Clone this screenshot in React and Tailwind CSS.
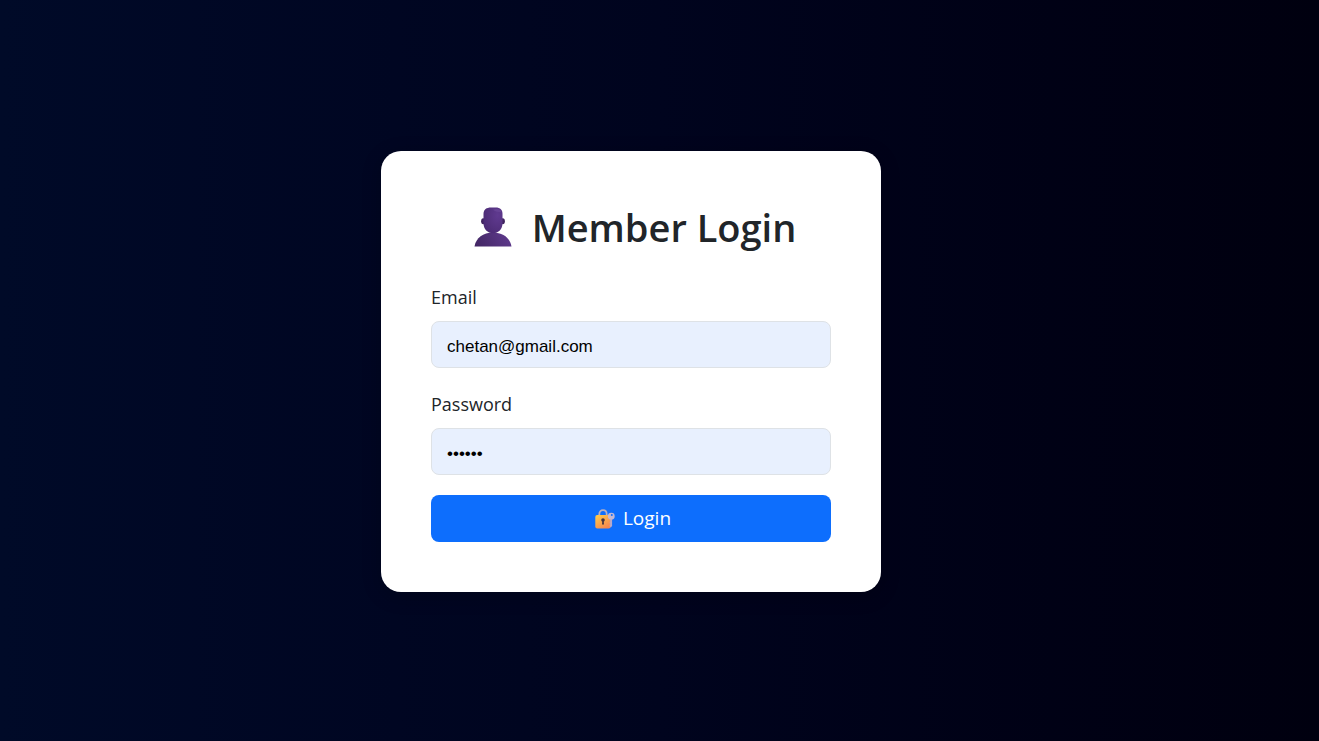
import React from "react";

function MemberIcon() {
  return (
    <svg className="h-10 w-[38px] shrink-0" viewBox="0 0 38 40" aria-hidden="true">
      <defs>
        <radialGradient id="head" cx="0.75" cy="0.3" r="0.9">
          <stop offset="0" stopColor="#603a90" />
          <stop offset="1" stopColor="#4a2a72" />
        </radialGradient>
        <linearGradient id="body" x1="0" y1="0.6" x2="1" y2="0.4">
          <stop offset="0" stopColor="#432765" />
          <stop offset="1" stopColor="#5f3a8d" />
        </linearGradient>
      </defs>
      <ellipse cx="9.3" cy="14.3" rx="2.2" ry="3" fill="#40245f" />
      <ellipse cx="28.7" cy="14.3" rx="2.2" ry="3" fill="#40245f" />
      <path d="M0.5 39.5C2 31 9 25.6 19 25.6S36 31 37.5 39.5Z" fill="url(#body)" />
      <path d="M9.5 7C9.5 2.5 12.5 0.5 17 0.5H21.5C26.5 0.5 28.5 3 28.5 7V16C28.5 22 24.5 26.3 19 26.3S9.5 22 9.5 16Z" fill="url(#head)" />
      <path d="M19 2.8C21.5 4.8 25 5.4 27.6 4.7C26.5 2 22.5 1.5 19 2.8Z" fill="#7350a1" opacity="0.5" />
    </svg>
  );
}

function LockKeyIcon() {
  return (
    <svg className="h-5 w-5 shrink-0" viewBox="0 0 20 20" aria-hidden="true">
      <defs>
        <linearGradient id="lock" x1="0" y1="0" x2="0.7" y2="1">
          <stop offset="0" stopColor="#ffce4a" />
          <stop offset="1" stopColor="#f5864f" />
        </linearGradient>
      </defs>
      <path d="M4.3 7V5.2C4.3 2.7 5.7 1.2 8 1.2S11.7 2.7 11.7 5.2V7" fill="none" stroke="#b7afc2" strokeWidth="1.8" />
      <rect x="0.3" y="6" width="15.4" height="13.4" rx="2" fill="url(#lock)" />
      <circle cx="8" cy="11" r="1.8" fill="#463440" />
      <path d="M7.3 11H8.7L9 15.5H7Z" fill="#463440" />
      <path d="M15.1 8H17.1V17L15.8 18.4L14.7 17.2V15.8L15.4 15L14.7 14.2V13L15.1 12.5Z" fill="#b8a9c9" />
      <path fillRule="evenodd" d="M16.3 3.8A3.4 3.4 0 1 1 16.3 10.6A3.4 3.4 0 1 1 16.3 3.8ZM16.8 5A1 1 0 1 0 16.8 7A1 1 0 1 0 16.8 5Z" fill="#c3b8d3" />
    </svg>
  );
}

function Field({ id, label, type, defaultValue, autoComplete }) {
  return (
    <div className="mb-5">
      <label htmlFor={id} className="mb-2 block text-lg leading-8">
        {label}
      </label>
      <input
        id={id}
        name={id}
        type={type}
        defaultValue={defaultValue}
        autoComplete={autoComplete}
        className="block h-[47px] w-full rounded-lg border border-[#dee2e6] bg-[#e8f0fe] px-[15px] pt-1 font-['Liberation_Sans',Arial,sans-serif] text-[17px] text-black outline-none focus:border-[#86b7fe]"
      />
    </div>
  );
}

export default function App() {
  return (
    <main className="flex min-h-screen items-center justify-center bg-linear-to-r from-[#000a28] via-[#00041e] to-[#00000f] pt-0.5 pr-[57px] font-['Open_Sans','Noto_Sans',sans-serif] text-[#212529]">
      <section className="w-full max-w-[500px] rounded-[20px] bg-white p-[50px] shadow-[0_4px_20px_rgba(0,0,0,0.2)]">
        <h1 className="mb-[30px] flex items-center justify-center gap-5 pt-0.5 pl-2 text-[38px] leading-12 font-semibold">
          <MemberIcon />
          Member Login
        </h1>
        <form onSubmit={(event) => event.preventDefault()}>
          <Field id="email" label="Email" type="email" defaultValue="chetan@gmail.com" autoComplete="email" />
          <Field id="password" label="Password" type="password" defaultValue="chetan" autoComplete="current-password" />
          <button
            type="submit"
            className="flex h-[47px] w-full cursor-pointer items-center justify-center gap-2 rounded-lg bg-[#0d6efd] pl-1 text-[19px] text-white hover:bg-[#0b5ed7]"
          >
            <LockKeyIcon />
            Login
          </button>
        </form>
      </section>
    </main>
  );
}
